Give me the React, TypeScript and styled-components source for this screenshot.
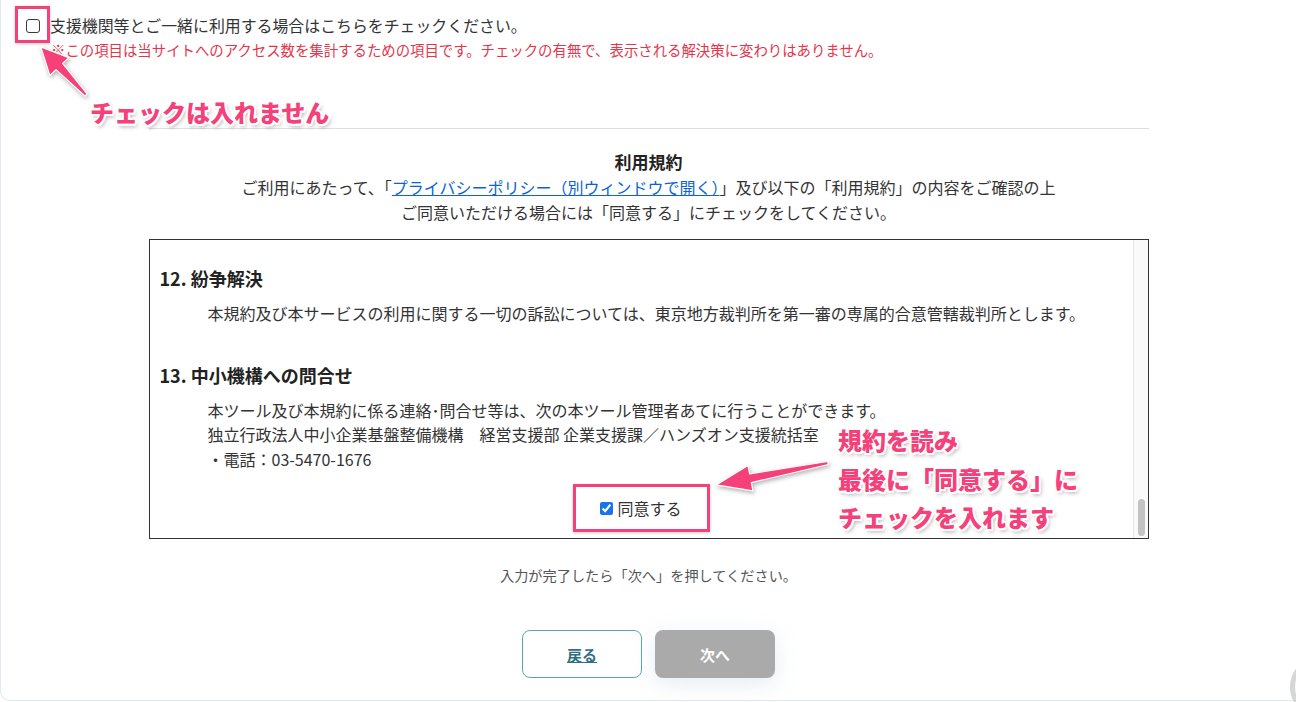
import React from 'react';
import styled, { createGlobalStyle } from 'styled-components';

const GlobalStyle = createGlobalStyle`
  html, body {
    margin: 0;
    padding: 0;
    background: #ffffff;
  }
  body {
    font-family: "Noto Sans CJK JP", "Noto Sans", sans-serif;
    color: #333333;
  }
`;

const PINK = '#f5407a';

// Page frame
const Page = styled.div`
  position: relative;
  width: 1296px;
  height: 702px;
  overflow: hidden;
  background: #ffffff;
`;

// White card, only its left edge and bottom-left corner are visible
const Card = styled.div`
  box-sizing: border-box;
  width: 1296px;
  height: 701px;
  border-left: 1px solid #e2e9ee;
  border-bottom: 1px solid #e2e9ee;
  border-bottom-left-radius: 10px;
`;

const TopSection = styled.div`
  padding: 17px 0 0 25px;
`;

const CheckRow = styled.label`
  display: flex;
  align-items: center;
  gap: 10px;
  height: 18px;
  font-size: 15.9px;
  line-height: 18px;
  color: #333;
`;

const EmptyBox = styled.span`
  position: relative;
  display: inline-block;
  box-sizing: border-box;
  width: 14px;
  height: 14px;
  border: 1.6px solid #3a3a3a;
  border-radius: 3px;
`;

const Note = styled.p`
  margin: 6px 0 0 25px;
  font-size: 14.4px;
  line-height: 18px;
  color: #e3364d;
`;

// Pink annotation frame drawn over a control
const Highlight = styled.span<{ $t: number; $r: number; $b: number; $l: number }>`
  position: absolute;
  top: ${p => p.$t}px;
  right: ${p => p.$r}px;
  bottom: ${p => p.$b}px;
  left: ${p => p.$l}px;
  border: 3px solid ${PINK};
  box-shadow: 0 1px 3px rgba(0, 0, 0, 0.2);
  pointer-events: none;
`;

const Column = styled.div`
  width: 1000px;
  margin: 69px auto 0;
  border-top: 1px solid #dedede;
`;

const Title = styled.h2`
  margin: 21px 0 0;
  text-align: center;
  font-size: 17px;
  font-weight: 700;
  line-height: 24px;
  color: #222;
`;

const Lead = styled.p`
  margin: 1px 0 0;
  text-align: center;
  font-size: 16px;
  line-height: 25px;
  color: #333;
`;

const PolicyLink = styled.a`
  color: #0b63d6;
  text-decoration: underline;
`;

const TermsBox = styled.div`
  box-sizing: border-box;
  display: flex;
  height: 300px;
  margin-top: 14px;
  border: 1px solid #333;
`;

const TermsContent = styled.div`
  flex: 1;
  overflow: hidden;
  padding-top: 26px;
`;

const SectionHeading = styled.h3<{ $gap?: number }>`
  margin: ${p => p.$gap ?? 0}px 0 0;
  padding-left: 10px;
  font-size: 18px;
  font-weight: 700;
  line-height: 24px;
  color: #222;
`;

const Para = styled.div`
  margin-top: 11px;
  padding-left: 58px;
  font-size: 16px;
  line-height: 24.5px;
  color: #333;
`;

const AgreeRow = styled.div`
  display: flex;
  justify-content: center;
  margin-top: 25px;
`;

const AgreeLabel = styled.label`
  position: relative;
  display: inline-flex;
  align-items: center;
  gap: 4px;
  height: 24px;
  font-size: 16px;
  color: #333;

  input {
    width: 13px;
    height: 13px;
    margin: 0;
    accent-color: #1a73e8;
  }
`;

const ScrollTrack = styled.div`
  box-sizing: border-box;
  display: flex;
  align-items: flex-end;
  width: 15px;
  padding: 0 3px 2px 4px;
  background: #fafafa;
  border-left: 1px solid #e6e6e6;
`;

const ScrollThumb = styled.div`
  width: 8px;
  height: 37px;
  border-radius: 4px;
  background: #c3c3c3;
`;

const Instruction = styled.p`
  margin: 26px 0 0;
  text-align: center;
  font-size: 14.2px;
  line-height: 20px;
  color: #555;
`;

const ButtonRow = styled.div`
  display: flex;
  justify-content: center;
  gap: 13px;
  margin-top: 45px;
`;

const Button = styled.button<{ $primary?: boolean }>`
  box-sizing: border-box;
  width: 120px;
  height: 48px;
  border-radius: 8px;
  font-family: inherit;
  font-size: 15px;
  font-weight: 700;
  border: ${p => (p.$primary ? 'none' : '1px solid #5aa6b9')};
  background: ${p => (p.$primary ? '#aaaaaa' : '#ffffff')};
  color: ${p => (p.$primary ? '#ffffff' : '#2f6f82')};
  text-decoration: ${p => (p.$primary ? 'none' : 'underline')};
  box-shadow: ${p => (p.$primary ? '0 6px 22px rgba(140, 175, 200, 0.22)' : 'none')};
`;

// Overlays: annotation callouts and arrows
const Callout = styled.div<{ $x: number; $y: number; $lh: number }>`
  position: absolute;
  left: ${p => p.$x}px;
  top: ${p => p.$y}px;
  font-size: 24px;
  font-weight: 900;
  line-height: ${p => p.$lh}px;
  color: ${PINK};
  white-space: nowrap;
  text-shadow:
    2px 0 0 #fff, -2px 0 0 #fff, 0 2px 0 #fff, 0 -2px 0 #fff,
    1.5px 1.5px 0 #fff, -1.5px -1.5px 0 #fff, 1.5px -1.5px 0 #fff, -1.5px 1.5px 0 #fff,
    2px 3px 4px rgba(0, 0, 0, 0.35);
`;

const ArrowLayer = styled.svg`
  position: absolute;
  inset: 0;
  pointer-events: none;
  filter: drop-shadow(1px 2px 2px rgba(0, 0, 0, 0.3));
`;

const FloatingButton = styled.div`
  position: absolute;
  left: 1290px;
  top: 656px;
  width: 62px;
  height: 62px;
  box-sizing: border-box;
  border-radius: 50%;
  border: 5px solid #d6d6d6;
  background: #fbfbfb;
`;

type ArrowProps = { x: number; y: number; angle: number; len: number; head: number; half: number };

const Arrow: React.FC<ArrowProps> = ({ x, y, angle, len, head, half }) => {
  const base = len - head;
  const pts = [
    [0, -1.5], [base, -4.5], [base, -half], [len, 0], [base, half], [base, 4.5], [0, 1.5],
  ].map(p => p.join(',')).join(' ');
  return (
    <polygon
      points={pts}
      transform={`translate(${x} ${y}) rotate(${angle})`}
      fill={PINK}
      stroke="#ffffff"
      strokeWidth={1.2}
      strokeLinejoin="round"
    />
  );
};

const App: React.FC = () => {
  return (
    <Page>
      <GlobalStyle />
      <Card>
        <TopSection>
          <CheckRow>
            <EmptyBox>
              <Highlight $t={-13.6} $r={-10.6} $b={-10.6} $l={-11.6} />
            </EmptyBox>
            支援機関等とご一緒に利用する場合はこちらをチェックください。
          </CheckRow>
          <Note>
            ※この項目は当サイトへのアクセス数を集計するための項目です。チェックの有無で、表示される解決策に変わりはありません。
          </Note>
        </TopSection>

        <Column>
          <Title>利用規約</Title>
          <Lead>
            ご利用にあたって、「<PolicyLink href="#">プライバシーポリシー（別ウィンドウで開く）</PolicyLink>」及び以下の「利用規約」の内容をご確認の上
            <br />
            ご同意いただける場合には「同意する」にチェックをしてください。
          </Lead>

          <TermsBox>
            <TermsContent>
              <SectionHeading>12. 紛争解決</SectionHeading>
              <Para>
                本規約及び本サービスの利用に関する一切の訴訟については、東京地方裁判所を第一審の専属的合意管轄裁判所とします。
              </Para>
              <SectionHeading $gap={37}>13. 中小機構への問合せ</SectionHeading>
              <Para>
                本ツール及び本規約に係る連絡･問合せ等は、次の本ツール管理者あてに行うことができます。
                <br />
                独立行政法人中小企業基盤整備機構　経営支援部 企業支援課／ハンズオン支援統括室
                <br />
                ・電話：03-5470-1676
              </Para>
              <AgreeRow>
                <AgreeLabel>
                  <input type="checkbox" defaultChecked />
                  同意する
                  <Highlight $t={-12} $r={-28} $b={-12} $l={-27} />
                </AgreeLabel>
              </AgreeRow>
            </TermsContent>
            <ScrollTrack>
              <ScrollThumb />
            </ScrollTrack>
          </TermsBox>

          <Instruction>入力が完了したら「次へ」を押してください。</Instruction>
          <ButtonRow>
            <Button>戻る</Button>
            <Button $primary>次へ</Button>
          </ButtonRow>
        </Column>
      </Card>

      <ArrowLayer width="1296" height="702" viewBox="0 0 1296 702">
        <Arrow x={86} y={95} angle={226.8} len={66} head={27} half={13} />
        <Arrow x={828} y={463} angle={168.9} len={114} head={35} half={13} />
      </ArrowLayer>

      <Callout $x={90} $y={95} $lh={34}>チェックは入れません</Callout>
      <Callout $x={838} $y={421} $lh={38.5}>
        規約を読み
        <br />
        最後に「同意する」に
        <br />
        チェックを入れます
      </Callout>

      <FloatingButton />
    </Page>
  );
};

export default App;
